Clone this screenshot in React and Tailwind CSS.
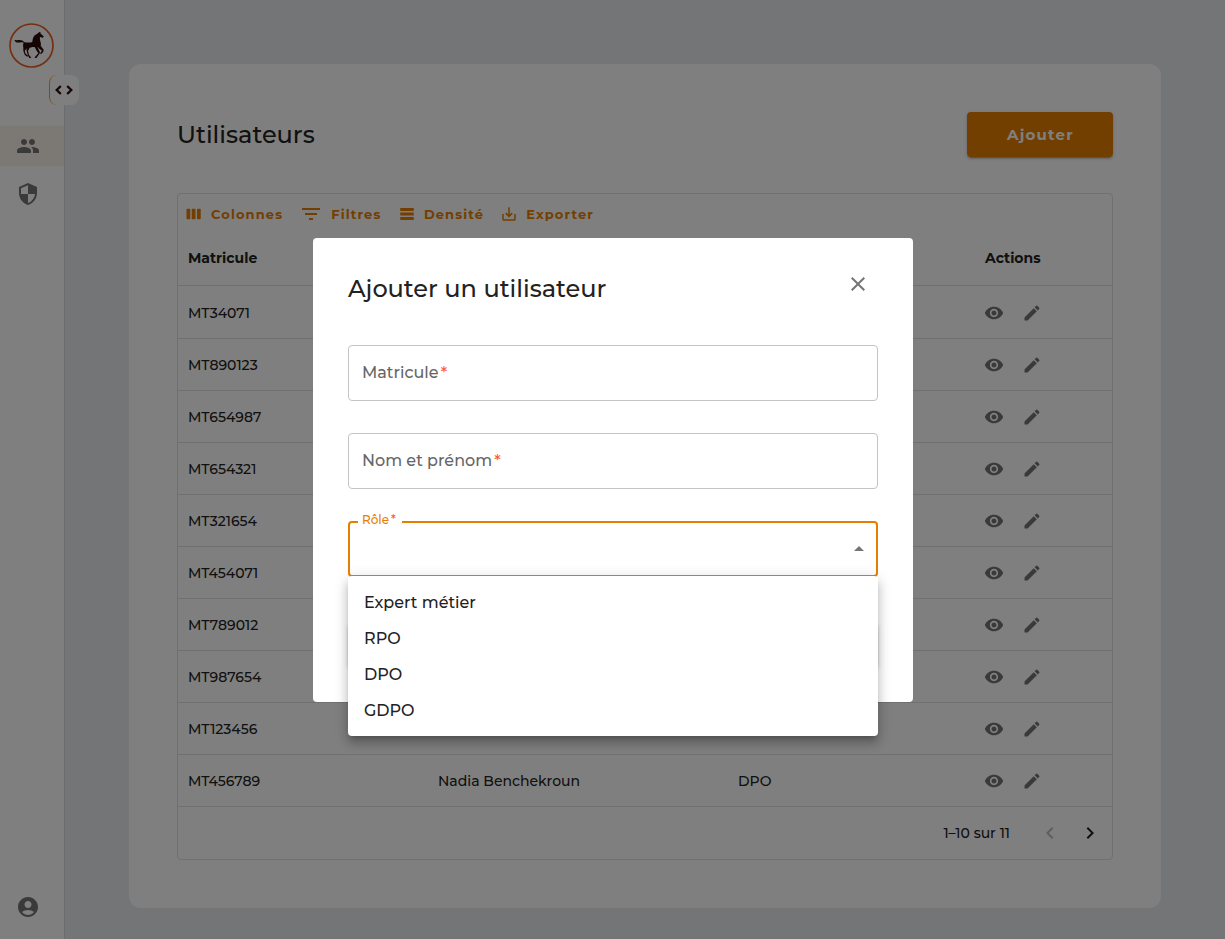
import React from "react";
import {
  MdAccountCircle,
  MdClose,
  MdEdit,
  MdFilterList,
  MdKeyboardArrowLeft,
  MdKeyboardArrowRight,
  MdPeople,
  MdSaveAlt,
  MdSecurity,
  MdVisibility,
} from "react-icons/md";

const rows = [
  { id: "MT34071" },
  { id: "MT890123" },
  { id: "MT654987" },
  { id: "MT654321" },
  { id: "MT321654" },
  { id: "MT454071" },
  { id: "MT789012" },
  { id: "MT987654" },
  { id: "MT123456" },
  { id: "MT456789", name: "Nadia Benchekroun", role: "DPO" },
];

const roles = ["Expert métier", "RPO", "DPO", "GDPO"];

function HorseLogo() {
  return (
    <svg viewBox="0 0 135 135" className="h-[45px] w-[45px]">
      <circle cx="67.5" cy="67.5" r="64.5" fill="none" stroke="#e8601c" strokeWidth="5" />
      <g transform="translate(-9 -8)" fill="#2b0a08">
        <path d="M25 59 L34 60 C42 57 50 59 56 66 C64 67 74 67 79 65 C80 54 83 44 93 41 L99 36 L103 35 L104 40 L113 48 L111 52 L102 50 C100 56 104 64 105 71 C105 77 101 80 94 81 L80 80 C72 82 67 82 62 84 L54 82 C50 76 51 70 53 67 C46 63 38 69 29 65 Z" />
        <path d="M52 76 L64 81 L56 92 L59 100 L67 107 L63 109 L56 103 L52 91 Z" />
        <path d="M61 80 L72 80 L66 92 L69 104 L76 112 L71 114 L66 106 L62 92 Z" />
        <path d="M95 78 L103 75 L113 88 L112 94 L105 102 L102 99 L108 91 L98 84 Z" />
        <path d="M86 79 L94 79 L102 96 L100 101 L91 113 L86 113 L87 110 L97 99 L91 90 Z" />
      </g>
    </svg>
  );
}

function ColumnsIcon() {
  return (
    <svg viewBox="0 0 24 24" fill="currentColor" className="h-[18px] w-[18px]">
      <rect x="2" y="5" width="5" height="14" rx="1" />
      <rect x="9" y="5" width="5" height="14" rx="1" />
      <rect x="16" y="5" width="5" height="14" rx="1" />
    </svg>
  );
}

function DensityIcon() {
  return (
    <svg viewBox="0 0 24 24" fill="currentColor" className="h-[18px] w-[18px]">
      <path d="M21 8H3V4h18v4zM21 10H3v4h18v-4zM21 16H3v4h18v-4z" />
    </svg>
  );
}

function Sidebar() {
  return (
    <aside className="relative flex w-[65px] shrink-0 flex-col border-r border-[#d5d8dc] bg-white">
      <div className="pl-[9px] pt-[22.5px]">
        <HorseLogo />
      </div>
      <button className="absolute left-[49px] top-[75px] z-10 flex h-[30px] w-[30px] items-center justify-center rounded-lg border-l border-[#f5a01c] bg-white pr-px">
        <svg viewBox="0 0 20 12" className="h-3 w-5" fill="none" stroke="#2b0a08" strokeWidth="2.3">
          <path d="M6.8 2 2.7 6l4.1 4M13.2 2l4.1 4-4.1 4" />
        </svg>
      </button>
      <nav className="mt-[58.5px] flex flex-col text-[#757575]">
        <a className="flex h-10 items-center bg-[#f9f0e6] pl-4">
          <MdPeople size={24} />
        </a>
        <a className="mt-2 flex h-10 items-center pl-4">
          <MdSecurity size={24} />
        </a>
      </nav>
      <div className="mt-auto pb-5 pl-4 text-[#757575]">
        <MdAccountCircle size={24} />
      </div>
    </aside>
  );
}

function ToolbarButton({ icon, children, className }) {
  return (
    <button
      className={"flex items-center gap-2 text-[13px] font-bold tracking-[1.12px] text-[#e67f00] " + className}
    >
      {icon}
      <span className="pt-[2px]">{children}</span>
    </button>
  );
}

function UsersTable() {
  return (
    <div className="mt-9 flex h-[667px] flex-col rounded border border-[#e0e0e0] text-[14px] font-medium text-[#222]">
      <div className="flex h-9 items-center pt-1">
        <ToolbarButton className="ml-[7px]" icon={<ColumnsIcon />}>
          Colonnes
        </ToolbarButton>
        <ToolbarButton className="ml-[16px]" icon={<MdFilterList size={24} />}>
          Filtres
        </ToolbarButton>
        <ToolbarButton className="ml-[16.5px]" icon={<DensityIcon />}>
          Densité
        </ToolbarButton>
        <ToolbarButton className="ml-[16px]" icon={<MdSaveAlt size={18} />}>
          Exporter
        </ToolbarButton>
      </div>
      <div className="flex h-14 shrink-0 items-center border-b border-[#e0e0e0] pt-[2px] font-bold">
        <div className="w-[797px] pl-[10px]">Matricule</div>
        <div className="pl-[10px]">Actions</div>
      </div>
      {rows.map((r) => (
        <div
          key={r.id}
          className="flex h-[52px] shrink-0 items-center border-b border-[#e0e0e0] [&:nth-child(3)]:h-[53px] [&:nth-child(3)]:pt-px"
        >
          <div className="w-[250px] pl-[10px] pt-[2px]">{r.id}</div>
          <div className="w-[300px] pl-[10px] pt-[2px]">{r.name}</div>
          <div className="w-[247px] pl-[10px] pt-[2px]">{r.role}</div>
          <div className="flex items-center gap-[18px] pl-[9px] text-[#757575]">
            <MdVisibility size={20} />
            <MdEdit size={20} />
          </div>
        </div>
      ))}
      <div className="flex flex-1 items-center justify-end pr-[10px]">
        <span className="mr-[28px]">1–10 sur 11</span>
        <MdKeyboardArrowLeft size={24} className="mr-4 text-[#bdbdbd]" />
        <MdKeyboardArrowRight size={24} />
      </div>
    </div>
  );
}

function TextField({ label }) {
  return (
    <div className="flex h-14 items-center rounded border border-[#c4c4c4] px-[13px] text-[16px] font-medium text-[#666]">
      <span>{label}</span>
      <span className="ml-[2px] text-[#ff5a3c]">*</span>
    </div>
  );
}

function AddUserDialog() {
  return (
    <div className="relative ml-px h-[464px] w-[600px] rounded bg-white px-[35px] pt-[35px]">
      <div className="flex h-[31px] items-center justify-between">
        <h2 className="text-[24px] font-medium text-[#222]">Ajouter un utilisateur</h2>
        <MdClose size={24} className="mb-[10px] mr-2 text-[#757575]" />
      </div>
      <div className="mt-[41px] flex flex-col gap-8">
        <TextField label="Matricule" />
        <TextField label="Nom et prénom" />
        <div className="relative flex h-14 items-center justify-end rounded border-2 border-[#e67f00] pb-[2px] pr-3">
          <span className="absolute -top-[11px] left-2 flex h-4 w-[44px] items-center bg-white pl-1 text-[12px] font-medium text-[#e67f00]">
            Rôle<span className="ml-[2px] text-[#ff5a3c]">*</span>
          </span>
          <svg viewBox="0 0 10 5" className="h-[5px] w-[10px]" fill="#757575">
            <path d="M0 5 5 0l5 5z" />
          </svg>
        </div>
      </div>
      <div className="mt-[46px] h-[45px] rounded bg-[#e0e0e0] shadow-[0_3px_1px_-2px_rgba(0,0,0,0.2),0_2px_2px_0_rgba(0,0,0,0.14),0_1px_5px_0_rgba(0,0,0,0.12)]" />
      <ul className="absolute left-[35px] top-[338px] h-40 w-[530px] rounded bg-white py-2 text-[16px] font-medium text-[#222] shadow-[0_5px_5px_-3px_rgba(0,0,0,0.2),0_8px_10px_1px_rgba(0,0,0,0.14),0_3px_14px_2px_rgba(0,0,0,0.12)]">
        {roles.map((role) => (
          <li key={role} className="flex h-9 items-center px-4 pt-[2px]">
            {role}
          </li>
        ))}
      </ul>
    </div>
  );
}

export default function App() {
  return (
    <div className="relative flex h-[939px] w-full overflow-hidden bg-[#e7eaef] font-['Montserrat','Inter',sans-serif]">
      <Sidebar />
      <main className="flex-1 px-16 pt-16">
        <section className="h-[844px] rounded-xl bg-white p-12">
          <div className="flex h-[45px] items-center justify-between">
            <h1 className="text-[24px] font-medium text-[#222]">Utilisateurs</h1>
            <button className="h-[45px] w-[146px] rounded bg-[#e67f00] pl-px pt-[2px] text-[15px] font-bold tracking-[1.2px] text-white shadow-[0_3px_1px_-2px_rgba(0,0,0,0.2),0_2px_2px_0_rgba(0,0,0,0.14),0_1px_5px_0_rgba(0,0,0,0.12)]">
              Ajouter
            </button>
          </div>
          <UsersTable />
        </section>
      </main>
      <div className="absolute inset-0 z-20 flex items-start justify-center bg-black/50 pt-[238px]">
        <AddUserDialog />
      </div>
    </div>
  );
}
